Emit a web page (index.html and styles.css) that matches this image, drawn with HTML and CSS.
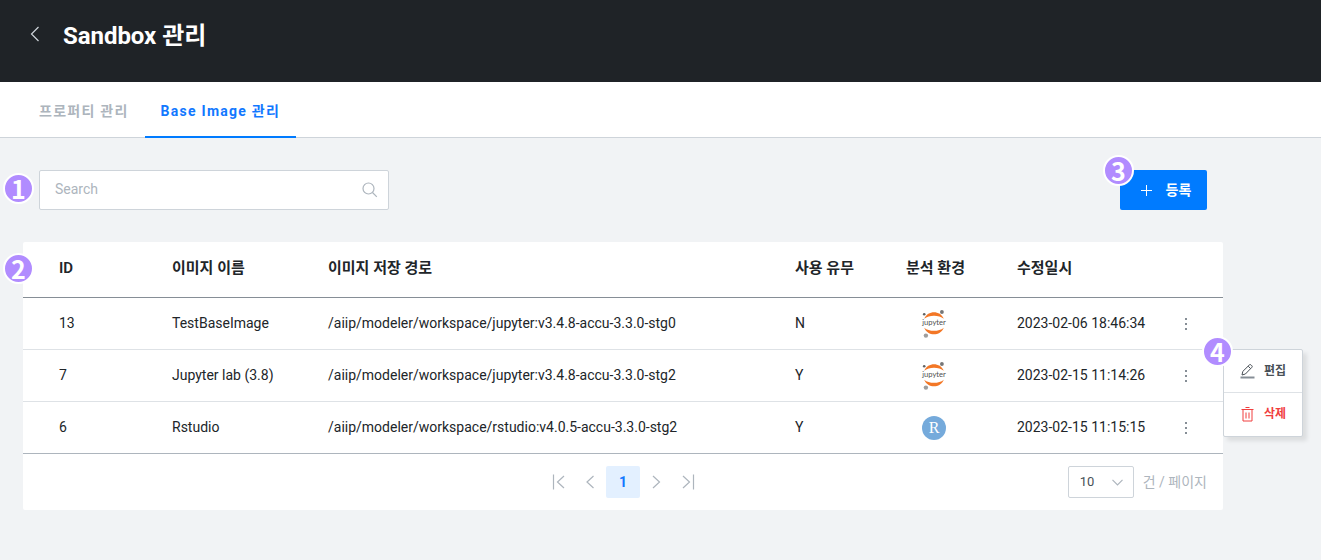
FILE: index.html
```html
<!DOCTYPE html>
<html lang="ko">
<head>
<meta charset="utf-8">
<title>Sandbox 관리</title>
<link rel="stylesheet" href="styles.css">
</head>
<body>
<header class="topbar">
  <svg class="back" width="12" height="16" viewBox="0 0 12 16"><path d="M9.500 1 2.500 8l7 7"/></svg>
  <h1 class="title">Sandbox 관리</h1>
</header>
<nav class="tabs">
  <a class="tab">프로퍼티 관리</a>
  <a class="tab tab-active">Base Image 관리</a>
</nav>
<main class="content">
  <div class="toolbar">
    <div class="search">
      <span>Search</span>
      <svg width="16" height="16" viewBox="0 0 16 16"><circle cx="6.500" cy="6.500" r="5.500"/><path d="m10.500 10.500 4.300 4.300"/></svg>
    </div>
    <button class="register">
      <svg width="11" height="11" viewBox="0 0 11 11"><path d="M5.500 0v11M0 5.500h11"/></svg>
      <span>등록</span>
    </button>
  </div>
  <section class="card">
    <div class="row head"><span>ID</span><span>이미지 이름</span><span>이미지 저장 경로</span><span>사용 유무</span><span>분석 환경</span><span>수정일시</span><span></span></div>
    <div class="row"><span>13</span><span>TestBaseImage</span><span>/aiip/modeler/workspace/jupyter:v3.4.8-accu-3.3.0-stg0</span><span>N</span>
      <span class="env"><svg class="jupyter" width="26" height="30" viewBox="0 0 26 30">
        <path class="arc" d="M3.200 9.800C5 5.300 9 3.200 13 3.200s8 2.100 9.800 6.600C20.200 7.600 16.800 6.700 13 6.700s-7.200.9-9.800 3.100z"/>
        <path class="arc" d="M3.200 18.700C5 23.200 9 25.300 13 25.300s8-2.100 9.800-6.600c-2.600 2.200-6 3.100-9.800 3.100s-7.200-.9-9.800-3.100z"/>
        <circle cx="20.900" cy="3" r="1.900" fill="#767677"/><circle cx="3.200" cy="5.200" r="1.300" fill="#616262"/><circle cx="4.900" cy="26.600" r="2.200" fill="#9e9e9e"/>
        <text x="13" y="16" text-anchor="middle" textLength="23.500" lengthAdjust="spacingAndGlyphs">jupyter</text>
      </svg></span>
      <span>2023-02-06 18:46:34</span><span class="more"><i></i><i></i><i></i></span></div>
    <div class="row"><span>7</span><span>Jupyter lab (3.8)</span><span>/aiip/modeler/workspace/jupyter:v3.4.8-accu-3.3.0-stg2</span><span>Y</span>
      <span class="env"><svg class="jupyter" width="26" height="30" viewBox="0 0 26 30">
        <path class="arc" d="M3.200 9.800C5 5.300 9 3.200 13 3.200s8 2.100 9.800 6.600C20.200 7.600 16.800 6.700 13 6.700s-7.200.9-9.800 3.100z"/>
        <path class="arc" d="M3.200 18.700C5 23.200 9 25.300 13 25.300s8-2.100 9.800-6.600c-2.600 2.200-6 3.100-9.800 3.100s-7.200-.9-9.800-3.100z"/>
        <circle cx="20.900" cy="3" r="1.900" fill="#767677"/><circle cx="3.200" cy="5.200" r="1.300" fill="#616262"/><circle cx="4.900" cy="26.600" r="2.200" fill="#9e9e9e"/>
        <text x="13" y="16" text-anchor="middle" textLength="23.500" lengthAdjust="spacingAndGlyphs">jupyter</text>
      </svg></span>
      <span>2023-02-15 11:14:26</span><span class="more"><i></i><i></i><i></i></span></div>
    <div class="row last"><span>6</span><span>Rstudio</span><span>/aiip/modeler/workspace/rstudio:v4.0.5-accu-3.3.0-stg2</span><span>Y</span>
      <span class="env"><b class="rstudio">R</b></span>
      <span>2023-02-15 11:15:15</span><span class="more"><i></i><i></i><i></i></span></div>
    <footer class="footer">
      <div class="pager">
        <span class="page"><svg width="13" height="16" viewBox="0 0 13 16"><path d="M1.500.5v15M12 2 5.500 8l6.500 6"/></svg></span>
        <span class="page"><svg width="13" height="16" viewBox="0 0 13 16"><path d="M9.500 2 3 8l6.500 6"/></svg></span>
        <span class="page page-current">1</span>
        <span class="page"><svg width="13" height="16" viewBox="0 0 13 16"><path d="M3 2 9.500 8 3 14"/></svg></span>
        <span class="page"><svg width="13" height="16" viewBox="0 0 13 16"><path d="M11.500.5v15M1 2l6.500 6L1 14"/></svg></span>
      </div>
      <div class="size">
        <div class="select">10<svg width="11" height="7" viewBox="0 0 11 7"><path d="m.5.800 5 5 5-5"/></svg></div>
        <span>건 / 페이지</span>
      </div>
    </footer>
  </section>
</main>
<div class="menu">
  <div class="menu-item"><svg width="15" height="15" viewBox="0 0 15 15"><path d="m2 11 .8-3.600L9.400.9q.8-.7 1.600 0l.9.900q.7.700 0 1.500L5.400 10 2 11zM8.200 2.200l2.400 2.400"/><path class="base" d="M.5 13.500h14"/></svg><span>편집</span></div>
  <div class="menu-item danger"><svg width="13" height="15" viewBox="0 0 13 15"><path d="M.5 2.500h12M4.500.5h4M2 2.500v11.500h9V2.500M5 5.500v6M8 5.500v6"/></svg><span>삭제</span></div>
</div>
<span class="badge badge-search">1</span>
<span class="badge badge-table">2</span>
<span class="badge badge-register">3</span>
<span class="badge badge-menu">4</span>
</body>
</html>
```
FILE: styles.css
```css
* { box-sizing: border-box; }
body {
  margin: 0;
  height: 560px;
  overflow: hidden;
  position: relative;
  background: #f1f3f5;
  color: #212529;
  font: 14px/20px Roboto, "Noto Sans CJK KR", sans-serif;
}
svg { display: block; fill: none; stroke: #adb5bd; stroke-width: 1.2; }
.topbar { height: 82px; background: #1f2327; display: flex; padding: 20px 0 0 29px; }
.back { margin-top: 6px; stroke: #ced4da; }
.title { margin: 1px 0 0 22px; font-size: 24px; line-height: 30px; font-weight: 700; color: #fff; letter-spacing: -.05px; }
.tabs { height: 56px; background: #fff; border-bottom: 1px solid #ced4da; display: flex; padding-left: 23px; }
.tab { height: 56px; padding: 0 16px; line-height: 59px; font-weight: 700; letter-spacing: 1.260px; color: #adb5bd; }
.tab-active { color: #1278ff; border-bottom: 2px solid #007bff; }
.content { padding: 32px 98px 0 23px; }
.toolbar { display: flex; justify-content: space-between; padding: 0 16px; margin-bottom: 32px; }
.search {
  width: 350px; height: 40px; padding: 0 10px 0 15px; display: flex; align-items: center; justify-content: space-between;
  background: #fff; border: 1px solid #ced4da; border-radius: 2px; color: #adb5bd;
}
.search span { margin-top: -2px; }
.register {
  width: 87px; height: 40px; padding: 0 0 0 5px; border: 0; border-radius: 2px; background: #007bff; color: #fff;
  display: flex; align-items: center; justify-content: center; gap: 14px; font: inherit; font-weight: 700;
}
.register svg { stroke: #fff; stroke-width: 1; }
.card { background: #fff; border-radius: 2px; width: 1200px; height: 268px; }
.row {
  height: 52px; display: grid; grid-template-columns: 113px 156px 467px 111px 111px 149px 40px; align-items: center;
  padding: 0 0 2px 36px; border-bottom: 1px solid #dee2e6; white-space: nowrap;
}
.head { height: 56px; border-color: #868e96; font-size: 15px; font-weight: 500; padding-bottom: 3px; }
.head span { font-family: Roboto, "Noto Sans CJK KR", sans-serif; font-weight: 600; }
.last { border-color: #adb5bd; }
.env { padding: 2px 0 0 15px; }
.jupyter { stroke: none; }
.jupyter .arc { fill: #f37726; }
.jupyter text { font: 8px Lato, sans-serif; fill: #4e4e4e; }
.rstudio {
  display: block; width: 24px; height: 24px; margin: 1px 0 0 1px; border-radius: 50%; background: #75aadb; color: #fff;
  font: 16px/23px "Liberation Serif", serif; text-align: center;
}
.more { width: 40px; display: flex; flex-direction: column; align-items: center; gap: 3px; padding-top: 2px; }
.more i { width: 2px; height: 2px; background: #868e96; }
.footer { height: 56px; display: flex; justify-content: space-between; align-items: center; padding: 0 16px 0 519px; }
.pager { display: flex; }
.page { width: 32px; height: 32px; display: flex; align-items: center; justify-content: center; }
.page-current { width: 34px; border-radius: 2px; background: #e3f0ff; color: #1278ff; font-weight: 700; }
.size { display: flex; align-items: center; gap: 9px; color: #adb5bd; }
.select {
  width: 66px; height: 32px; padding: 0 10px 0 11px; display: flex; align-items: center; justify-content: space-between;
  border: 1px solid #ced4da; border-radius: 2px; color: #495057; font-size: 13px;
}
.menu {
  position: absolute; left: 1223px; top: 349px; width: 80px; height: 88px; background: #fff;
  border: 1px solid #ced4da; border-radius: 2px; box-shadow: 4px 4px 4px rgba(0, 0, 0, .09);
}
.menu-item { height: 42px; display: flex; align-items: center; gap: 9px; padding-left: 16px; font-size: 12px; font-weight: 700; color: #495057; }
.menu-item svg { stroke: #495057; stroke-width: 1; }
.menu-item .base { stroke: #868e96; stroke-width: 2; }
.menu-item + .menu-item { height: 43px; border-top: 1px solid #dee2e6; color: #f03e3e; gap: 10px; padding-left: 17px; }
.menu-item.danger svg { stroke: #f03e3e; }
.badge {
  position: absolute; width: 31px; height: 31px; border: 2px solid #fff; border-radius: 50%; background: #b18cff;
  color: #fff; font: 700 25px/26px "Noto Sans CJK KR", sans-serif; text-align: center;
}
.badge-search { left: 3px; top: 173px; }
.badge-table { left: 3px; top: 253px; }
.badge-register { left: 1103px; top: 155px; }
.badge-menu { left: 1202px; top: 336px; }
```
